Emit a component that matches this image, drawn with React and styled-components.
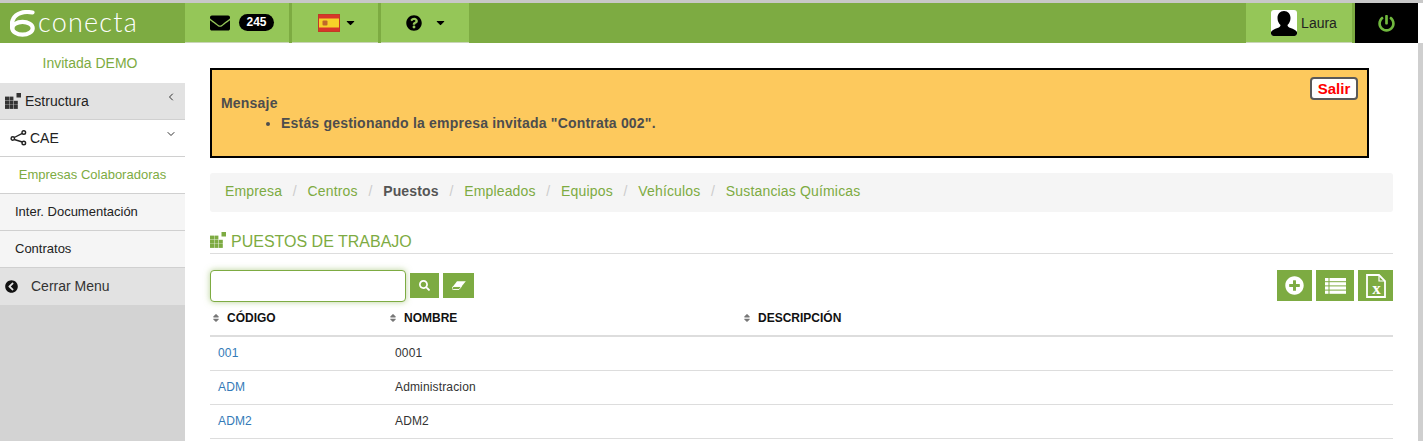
import React from 'react';
import styled, { createGlobalStyle } from 'styled-components';
import { FaEnvelope, FaQuestionCircle, FaSearch, FaPlusCircle, FaPowerOff, FaChevronCircleLeft, FaSort, FaCaretDown } from 'react-icons/fa';
import { FiChevronLeft, FiChevronDown } from 'react-icons/fi';

const Global = createGlobalStyle`
  html, body { margin: 0; padding: 0; background: #fff; overflow: hidden; }
  body { font-family: "Liberation Sans", Arial, sans-serif; font-size: 13px; color: #333; }
  * { box-sizing: border-box; }
`;
const Page = styled.div`display: flex; width: 1423px; height: 441px; overflow: hidden; border-top: 3px solid #c8c8c8;`;
const Main = styled.div`flex: 1; min-width: 0; display: flex; flex-direction: column;`;
const ScrollTrack = styled.div`width: 5px; margin-top: 40px; background: #cfcfcf;`;
const Header = styled.header`display: flex; height: 40px; background: #7dab42; flex: none;`;
const Logo = styled.div`width: 185px; display: flex; align-items: center; padding-left: 10px; gap: 3px;`;
const LogoText = styled.span`font-family: Lato, sans-serif; font-weight: 300; font-size: 27px; letter-spacing: 1.2px; color: #fff; line-height: 1; margin-top: -3px;`;
const NavItem = styled.div`
  width: ${p => p.$w}px; height: 40px; background: #95c658; border-bottom: 1px solid #c9d5b8;
  display: flex; align-items: center; justify-content: center; gap: ${p => p.$gap || 6}px; color: #000;
  margin-right: ${p => p.$mr || 0}px; padding-left: ${p => p.$pl || 0}px;
`;
const Badge = styled.span`background: #000; color: #fff; font-weight: 700; font-size: 12px; border-radius: 10px; padding: 2px 7px; line-height: 13px; font-family: "Liberation Sans", sans-serif;`;
const Spacer = styled.div`flex: 1;`;
const UserItem = styled(NavItem)`font-size: 14px; color: #222; gap: 4px;`;
const Power = styled.div`width: 66px; height: 40px; background: #000; display: flex; align-items: center; justify-content: center; color: #70b83e; font-size: 17px; border-left: 3px solid #7dab42;`;
const Body = styled.div`display: flex; flex: 1; min-height: 0;`;
const Side = styled.aside`width: 185px; flex: none; background: #d3d3d3; display: flex; flex-direction: column;`;
const SideTitle = styled.div`height: 40px; background: #fff; color: #7dab42; display: flex; align-items: center; justify-content: center; font-size: 14px; padding-right: 5px;`;
const SideRow = styled.div`
  height: 37px; display: flex; align-items: center; position: relative; font-size: 14px; color: #222; padding-bottom: 1px;
  background: ${p => p.$bg || '#fff'}; border-bottom: 1px solid #d0d0d0; padding-left: ${p => p.$pl || 5}px; gap: ${p => p.$gap || 4}px;
`;
const SubLabel = styled(SideRow)`color: #7dab42; font-size: 13px; justify-content: center; padding-left: 0; padding-right: 0;`;
const Sub = styled(SideRow)`font-size: 13px; padding-left: 15px;`;
const Chev = styled.span`position: absolute; right: 8px; top: 8px; font-size: 12px; color: #333; display: flex;`;
const Closer = styled(SideRow)`font-size: 14px; color: #333; gap: 13px; border-bottom: 0;`;
const Content = styled.main`flex: 1; min-width: 0; padding: 25px 25px 0 25px;`;
const Alert = styled.div`
  position: relative; width: 1159px; height: 90px; background: #fdc95d; border: 2px solid #000; padding: 23px 9px 0;
  font-weight: 700; font-size: 14px; letter-spacing: 0.2px; color: #4d4d4d; line-height: 20px;
`;
const AlertList = styled.ul`margin: 0; padding: 0 0 0 60px;`;
const Exit = styled.span`position: absolute; right: 9px; top: 7px; width: 48px; height: 23px; border: 2px solid #595959; border-radius: 4px; background: #fff; color: #f00; font-size: 15px; letter-spacing: 0; display: flex; align-items: center; justify-content: center;`;
const Crumbs = styled.nav`margin-top: 15px; height: 39px; background: #f5f5f5; border-radius: 3px; display: flex; align-items: center; padding: 0 0 3px 15px; font-size: 14px; letter-spacing: 0.16px; color: #7dab42;`;
const Sep = styled.span`color: #ccc; padding: 0 10.7px;`;
const Current = styled.b`color: #555;`;
const Title = styled.h2`margin: 20px 0 0; height: 22px; border-bottom: 1px solid #ddd; display: flex; align-items: flex-start; gap: 5px; font-weight: 400; font-size: 16px; line-height: 19px; color: #7dab42;`;
const Tools = styled.div`display: flex; align-items: flex-start; margin-top: 16px; height: 32px;`;
const Search = styled.div`width: 196px; height: 32px; background: #fff; border: 1px solid #7dab42; border-radius: 4px; box-shadow: 0 0 6px rgba(125,171,66,.55); margin-right: 4px;`;
const SmallBtn = styled.div`width: ${p => p.$w}px; height: 25px; margin: 3px 4px 0 0; background: #7dab42; color: #fff; display: flex; align-items: center; justify-content: center; font-size: 11px;`;
const BigBtn = styled.div`width: ${p => p.$w}px; height: 31px; margin-left: 4px; background: #7dab42; color: #fff; display: flex; align-items: center; justify-content: center; font-size: 19px;`;
const Table = styled.div`display: grid; grid-template-columns: 177px 354px 1fr; margin-top: 3px; font-size: 12px; letter-spacing: 0.15px;`;
const Th = styled.div`height: 32px; display: flex; align-items: center; gap: 6px; padding: 0 0 4px 2px; font-weight: 700; color: #111; border-bottom: 2px solid #ddd; font-size: 12px; letter-spacing: 0;`;
const Sort = styled.span`color: #777; font-size: 10px; display: flex; margin-left: -1px;`;
const Td = styled.div`height: 34px; display: flex; align-items: center; padding: 0 0 2px 8px; border-bottom: 1px solid #ddd; color: ${p => p.$link ? '#337ab7' : '#333'};`;

const Grid = ({ color, size = 16 }) => (
  <svg width={size} height={size} viewBox="0 0 16 16" fill={color}>
    {[0, 1, 2].flatMap(r => [0, 1, 2].map(c => (r === 0 && c === 2) ? null : <rect key={`${r}${c}`} x={c * 4.4} y={3.6 + r * 4.2} width="4" height="3.9" />))}
    <rect x="11.500" y="0" width="4.500" height="4.500" />
  </svg>
);
const Share = () => (
  <svg width="17" height="17" viewBox="0 0 17 17" fill="none" stroke="#222" strokeWidth="1.4">
    <circle cx="2.800" cy="9.500" r="1.700" /><circle cx="13.800" cy="3.500" r="1.800" /><circle cx="13.800" cy="14" r="1.800" />
    <path d="M4.300 8.500 12.300 4.400M4.300 10.500 12.300 13" />
  </svg>
);
const SixMark = () => (
  <svg width="25" height="27" viewBox="0 0 25 27" fill="none" stroke="#fff" strokeLinecap="round">
    <path d="M22.500 2.500C14 1 6 3 3.200 9 1.700 12 1.500 15 2.200 18" strokeWidth="4.200" />
    <ellipse cx="12.500" cy="18.200" rx="10.200" ry="6.400" strokeWidth="4.200" />
  </svg>
);
const Flag = () => (
  <svg width="22" height="18" viewBox="0 0 22 18">
    <rect width="22" height="18" fill="#d8352a" />
    <rect y="4.500" width="22" height="9" fill="#f7d128" />
    <rect x="4.500" y="6.500" width="5" height="5" rx="1" fill="#c0682a" />
    <rect x=".5" y=".5" width="21" height="17" fill="none" stroke="#c23a25" />
  </svg>
);
const Avatar = () => (
  <svg width="26" height="26" viewBox="0 0 26 26">
    <rect width="26" height="26" rx="3" fill="#fff" />
    <path d="M13 1c4 0 6.500 3 6.500 7 0 3-1.300 5.500-3 7 0 1.500 1 2.300 3 3 3 1 5.500 2 6.500 4v2a3 3 0 0 1-3 2H3a3 3 0 0 1-3-2v-2c1-2 3.500-3 6.500-4 2-.7 3-1.500 3-3-1.700-1.500-3-4-3-7 0-4 2.500-7 6.500-7Z" fill="#000" />
  </svg>
);
const Eraser = () => (
  <svg width="14" height="9" viewBox="0 0 14 9">
    <path d="M5 .2H13.800L9.500 5.500H1Z" fill="#fff" />
    <path d="M1 5.500H9.500L7 8.500H1.200C.3 8.500 0 7.800.4 7.200Z" fill="none" stroke="#fff" strokeWidth=".9" />
  </svg>
);
const ListIcon = () => (
  <svg width="21" height="16" viewBox="0 0 21 16" fill="#fff">
    {[0, 1, 2, 3].map(r => (
      <g key={r}>
        <rect x="0" y={r * 4.200} width="3.500" height="3.200" />
        <rect x="4.500" y={r * 4.200} width="16.500" height="3.200" />
      </g>
    ))}
  </svg>
);
const Excel = () => (
  <svg width="20" height="24" viewBox="0 0 20 24" fill="none">
    <path d="M1 1h12l6 6v16H1Z" stroke="#fff" strokeWidth="1.800" />
    <path d="M13 1v6h6" stroke="#fff" strokeWidth="1.200" />
    <text x="10.500" y="20" textAnchor="middle" fontFamily="Liberation Serif, serif" fontWeight="700" fontSize="17" fill="#fff">x</text>
  </svg>
);

const rows = [['001', '0001'], ['ADM', 'Administracion'], ['ADM2', 'ADM2']];
const crumbs = ['Empresa', 'Centros', 'Puestos', 'Empleados', 'Equipos', 'Vehículos', 'Sustancias Químicas'];

export default function App() {
  return (
    <>
      <Global />
      <Page>
        <Main>
          <Header>
            <Logo><SixMark /><LogoText>conecta</LogoText></Logo>
            <NavItem $w={104} $mr={3} $gap={9} $pl={10}><FaEnvelope size={20} /><Badge>245</Badge></NavItem>
            <NavItem $w={86} $mr={3} $gap={4} $pl={4}><Flag /><FaCaretDown size={13} /></NavItem>
            <NavItem $w={88} $gap={12} $pl={2}><FaQuestionCircle size={16} /><FaCaretDown size={13} /></NavItem>
            <Spacer />
            <UserItem $w={106} $pl={10}><Avatar />Laura</UserItem>
            <Power><FaPowerOff /></Power>
          </Header>
          <Body>
            <Side>
              <SideTitle>Invitada DEMO</SideTitle>
              <SideRow $bg="#e2e2e2"><Grid color="#333" />Estructura<Chev><FiChevronLeft /></Chev></SideRow>
              <SideRow $pl={10} $gap={3}><Share />CAE<Chev><FiChevronDown /></Chev></SideRow>
              <SubLabel>Empresas Colaboradoras</SubLabel>
              <Sub $bg="#f5f5f5">Inter. Documentación</Sub>
              <Sub $bg="#f5f5f5">Contratos</Sub>
              <Closer $bg="#e2e2e2"><FaChevronCircleLeft size={13} color="#111" />Cerrar Menu</Closer>
            </Side>
            <Content>
              <Alert>
                Mensaje
                <AlertList><li>Estás gestionando la empresa invitada "Contrata 002".</li></AlertList>
                <Exit>Salir</Exit>
              </Alert>
              <Crumbs>
                {crumbs.map((c, i) => (
                  <React.Fragment key={c}>
                    {i > 0 && <Sep>/</Sep>}
                    {c === 'Puestos' ? <Current>{c}</Current> : <span>{c}</span>}
                  </React.Fragment>
                ))}
              </Crumbs>
              <Title><Grid color="#7dab42" />PUESTOS DE TRABAJO</Title>
              <Tools>
                <Search />
                <SmallBtn $w={29}><FaSearch /></SmallBtn>
                <SmallBtn $w={31}><Eraser /></SmallBtn>
                <Spacer />
                <BigBtn $w={35}><FaPlusCircle /></BigBtn>
                <BigBtn $w={38}><ListIcon /></BigBtn>
                <BigBtn $w={35}><Excel /></BigBtn>
              </Tools>
              <Table>
                <Th><Sort><FaSort /></Sort>CÓDIGO</Th>
                <Th><Sort><FaSort /></Sort>NOMBRE</Th>
                <Th><Sort><FaSort /></Sort>DESCRIPCIÓN</Th>
                {rows.map(r => (
                  <React.Fragment key={r[0]}>
                    <Td $link>{r[0]}</Td><Td>{r[1]}</Td><Td />
                  </React.Fragment>
                ))}
              </Table>
            </Content>
          </Body>
        </Main>
        <ScrollTrack />
      </Page>
    </>
  );
}
